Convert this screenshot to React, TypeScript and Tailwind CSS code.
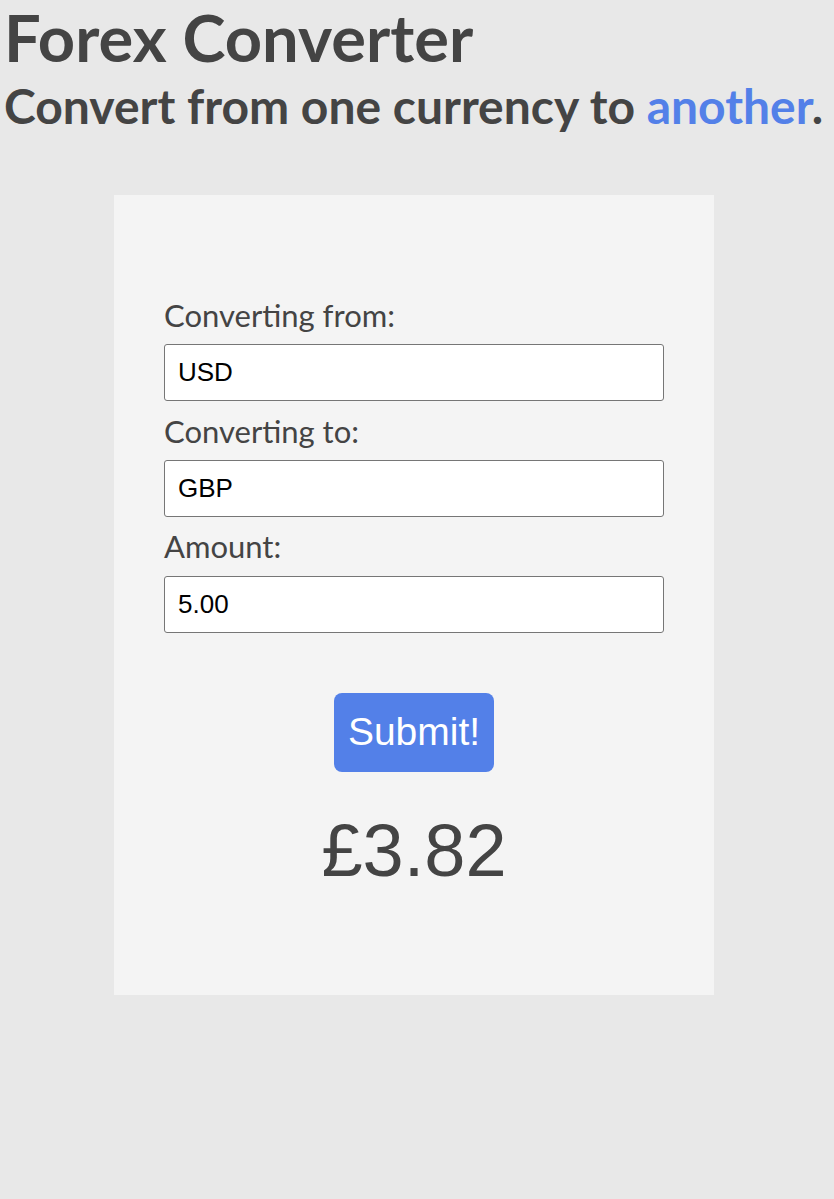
export default function App() {
  const inputCls =
    "mt-[10px] h-[57px] w-[500px] rounded-[3px] border-[1.5px] border-[#767676] bg-white px-[13px] text-[26px] text-black font-['Liberation_Sans',Arial,sans-serif]";
  const labelCls = "text-[31px] leading-[1.2]";

  return (
    <div className="min-h-[1199px] bg-[#e8e8e8] text-[#444444] font-['Lato','Liberation_Sans',sans-serif]">
      <header className="pl-[4px] pt-[5px]">
        <h1 className="text-[65px] font-bold leading-[1]">Forex Converter</h1>
        <h2 className="mt-[12px] text-[48px] font-bold leading-[1]">
          Convert from one currency to <span className="text-[#5380e8]">another</span>.
        </h2>
      </header>

      <div className="ml-[114px] mt-[65px] w-[600px] h-[800px] bg-[#f4f4f4] pt-[102px] px-[50px]">
        <form className="flex flex-col" onSubmit={(e) => e.preventDefault()}>
          <label className={labelCls}>Converting from:</label>
          <input className={inputCls} defaultValue="USD" />
          <label className={`mt-[11.5px] ${labelCls}`}>Converting to:</label>
          <input className={inputCls} defaultValue="GBP" />
          <label className={`mt-[11.5px] ${labelCls}`}>Amount:</label>
          <input className={inputCls} defaultValue="5.00" />
          <button
            type="submit"
            className="mx-auto mt-[60.5px] h-[79px] w-[160px] rounded-[8px] bg-[#5380e8] text-[39px] text-white font-['Liberation_Sans',Arial,sans-serif]"
          >
            Submit!
          </button>
        </form>
        <p className="mt-[42px] text-center text-[74px] leading-[1] font-['Liberation_Sans',Arial,sans-serif]">
          £3.82
        </p>
      </div>
    </div>
  );
}
